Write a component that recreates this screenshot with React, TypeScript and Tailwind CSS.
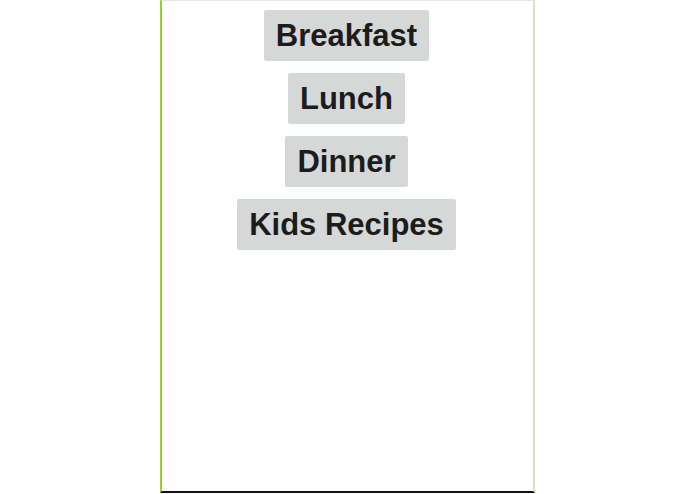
export default function App() {
  const items = ['Breakfast', 'Lunch', 'Dinner', 'Kids Recipes'];
  return (
    <div className="w-[695px] h-[494px] bg-white flex justify-center" style={{ fontFamily: '"Liberation Sans", Arial, sans-serif' }}>
      <div className="w-[375px] h-[493px] border-t border-t-[#e6e6e6] border-l-2 border-l-[#9acd32] border-r-2 border-r-[#d3e5b8] border-b-2 border-b-[#111] flex flex-col items-center gap-3 pt-[9px] pr-[2px]">
        {items.map((label) => (
          <button
            key={label}
            className="bg-[#d6d7d7] text-[#1c1c1c] font-bold text-[31px] leading-[35px] px-3 py-2 rounded-[2px]"
          >
            {label}
          </button>
        ))}
      </div>
    </div>
  );
}
